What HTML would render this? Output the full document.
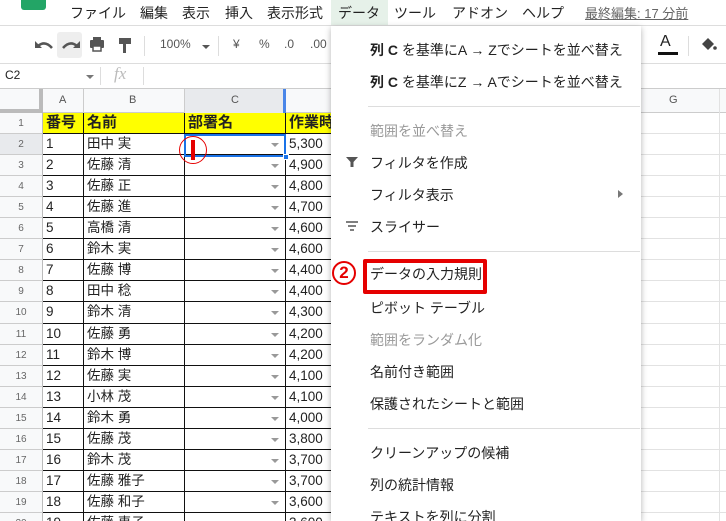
<!DOCTYPE html>
<html><head><meta charset="utf-8"><style>
*{margin:0;padding:0;box-sizing:border-box}
html,body{width:726px;height:521px;overflow:hidden}
body{background:#fff;font-family:"Liberation Sans","Noto Sans CJK JP",sans-serif;position:relative;color:#222}
.a{position:absolute}
.menu span{position:absolute;top:3px;font-size:14px;color:#222}
.rh{position:absolute;left:0;width:43px;text-align:center;font-size:10px;color:#666;background:#f8f9fa;border-bottom:1px solid #ccc;border-right:1px solid #bbb}
.c{position:absolute;font-size:13.5px;padding-left:3px;border-right:1px solid #111;border-bottom:1px solid #111;white-space:nowrap;overflow:hidden;line-height:20px}
.dd{position:absolute;width:0;height:0;border-left:4px solid transparent;border-right:4px solid transparent;border-top:4px solid #888}
.mi{position:absolute;left:370px;font-size:14px;color:#222;white-space:nowrap}
.dis{color:#999}
.sep{position:absolute;left:368px;width:272px;height:1px;background:#ddd}
</style></head><body>
<div class="a" style="left:21px;top:0;width:25px;height:10px;background:#23a566;border-radius:0 0 3px 3px"></div>
<div class="menu">
<span style="left:70px">ファイル</span><span style="left:140px">編集</span><span style="left:182px">表示</span><span style="left:225px">挿入</span><span style="left:267px">表示形式</span>
</div>
<div class="a" style="left:331px;top:0;width:57px;height:26px;background:#e6f1e9"></div>
<span class="a" style="left:338px;top:3px;font-size:14px">データ</span>
<span class="a" style="left:394px;top:3px;font-size:14px">ツール</span>
<span class="a" style="left:452px;top:3px;font-size:14px">アドオン</span>
<span class="a" style="left:522px;top:3px;font-size:14px">ヘルプ</span>
<span class="a" style="left:585px;top:3px;font-size:13px;color:#666;text-decoration:underline">最終編集: 17 分前</span>
<div class="a" style="left:0;top:25px;width:726px;height:1px;background:#ddd"></div>
<div class="a" style="left:57px;top:32px;width:25px;height:26px;background:#eee;border-radius:3px"></div>
<svg class="a" style="left:0;top:35px" width="140" height="20"><path d="M38 11 q7 -6 14 2" stroke="#555" stroke-width="2.5" fill="none"/><path d="M35 6 v7 h7z" fill="#555"/><path d="M77 11 q-7 -6 -14 2" stroke="#555" stroke-width="2.5" fill="none"/><path d="M80 6 v7 h-7z" fill="#555"/><rect x="90" y="5" width="14" height="8" fill="#555" rx="1"/><rect x="93" y="2" width="8" height="3" fill="#555"/><rect x="93" y="11" width="8" height="5" fill="#fff" stroke="#555" stroke-width="1.5"/><rect x="119" y="3" width="12" height="6" fill="#555"/><rect x="123" y="9" width="3" height="9" fill="#555"/></svg>
<div class="a" style="left:144px;top:36px;width:1px;height:20px;background:#ddd"></div>
<span class="a" style="left:160px;top:37px;font-size:12px;color:#555">100%</span>
<div class="dd" style="left:202px;top:45px;border-top-color:#555"></div>
<div class="a" style="left:218px;top:36px;width:1px;height:20px;background:#ddd"></div>
<span class="a" style="left:233px;top:37px;font-size:12px;color:#555">¥</span>
<span class="a" style="left:259px;top:37px;font-size:12px;color:#555">%</span>
<span class="a" style="left:284px;top:37px;font-size:12px;color:#555">.0</span>
<span class="a" style="left:310px;top:37px;font-size:12px;color:#555">.00</span>
<span class="a" style="left:660px;top:33px;font-size:16px;color:#222">A</span>
<div class="a" style="left:658px;top:52px;width:20px;height:3px;background:#111"></div>
<div class="a" style="left:688px;top:36px;width:1px;height:20px;background:#ddd"></div>
<svg class="a" style="left:700px;top:36px" width="18" height="16"><path d="M2 8 l6 -6 6 6 -6 6z" fill="#444"/><circle cx="15" cy="12" r="1.8" fill="#444"/></svg>
<div class="a" style="left:0;top:63px;width:726px;height:1px;background:#ddd"></div>
<span class="a" style="left:5px;top:68px;font-size:12px">C2</span>
<div class="dd" style="left:86px;top:75px;border-top-color:#777"></div>
<div class="a" style="left:100px;top:67px;width:1px;height:18px;background:#ddd"></div>
<span class="a" style="left:114px;top:64px;font-size:17px;color:#bbb;font-family:'Liberation Serif',serif;font-style:italic">fx</span>
<div class="a" style="left:143px;top:67px;width:1px;height:18px;background:#ddd"></div>
<div class="a" style="left:0;top:88px;width:726px;height:1px;background:#ccc"></div>
<div class="a" style="left:0;top:89px;width:726px;height:24px;background:#f8f9fa;border-bottom:1px solid #ccc"></div>
<div class="a" style="left:0;top:89px;width:43px;height:24px;border-right:4px solid #bbb;border-bottom:4px solid #bbb;background:#f8f9fa"></div>
<div class="a" style="left:184px;top:89px;width:101px;height:24px;background:#e8eaed"></div>
<div class="a" style="left:283px;top:89px;width:3px;height:24px;background:#4a86e8"></div>
<span class="a" style="left:59px;top:94px;font-size:11px;color:#555">A</span>
<span class="a" style="left:129px;top:94px;font-size:11px;color:#555">B</span>
<span class="a" style="left:231px;top:94px;font-size:11px;color:#555">C</span>
<span class="a" style="left:669px;top:94px;font-size:11px;color:#555">G</span>
<div class="a" style="left:83px;top:89px;width:1px;height:24px;background:#ccc"></div>
<div class="a" style="left:184px;top:89px;width:1px;height:24px;background:#ccc"></div>
<div class="a" style="left:719px;top:89px;width:1px;height:432px;background:#e2e2e2"></div>
<div id="grid"></div>
<div class="a" style="left:331px;top:26px;width:310px;height:495px;background:#fff;box-shadow:0 2px 6px rgba(0,0,0,.3)"></div>
<div class="mi" style="top:40px"><b>列 C</b> を基準にA → Zでシートを並べ替え</div>
<div class="mi" style="top:72px"><b>列 C</b> を基準にZ → Aでシートを並べ替え</div>
<div class="sep" style="top:106px"></div>
<div class="mi dis" style="top:121px">範囲を並べ替え</div>
<svg class="a" style="left:345px;top:156px" width="14" height="12"><path d="M1 1 h12 l-4.5 5 v5 h-3 v-5z" fill="#555"/></svg>
<div class="mi" style="top:153px">フィルタを作成</div>
<div class="mi" style="top:185px">フィルタ表示</div>
<div class="a" style="left:618px;top:190px;width:0;height:0;border-top:4px solid transparent;border-bottom:4px solid transparent;border-left:5px solid #777"></div>
<svg class="a" style="left:345px;top:221px" width="14" height="10"><path d="M1 1h12M3 5h8M5 9h4" stroke="#555" stroke-width="1.6"/></svg>
<div class="mi" style="top:217px">スライサー</div>
<div class="sep" style="top:251px"></div>
<div class="a" style="left:363px;top:259px;width:124px;height:35px;border:4px solid #e50000;border-radius:2px"></div>
<div class="a" style="left:332px;top:261px;width:24px;height:24px;border:2.5px solid #e50000;border-radius:50%;color:#e50000;font-weight:bold;font-size:17px;text-align:center;line-height:19px;background:#fff">2</div>
<div class="mi" style="top:264px">データの入力規則</div>
<div class="mi" style="top:298px">ピボット テーブル</div>
<div class="mi dis" style="top:330px">範囲をランダム化</div>
<div class="mi" style="top:362px">名前付き範囲</div>
<div class="mi" style="top:394px">保護されたシートと範囲</div>
<div class="sep" style="top:428px"></div>
<div class="mi" style="top:443px">クリーンアップの候補</div>
<div class="mi" style="top:475px">列の統計情報</div>
<div class="mi" style="top:507px">テキストを列に分割</div>
<script>
var d=[["番号","名前","部署名","作業時"],["1","田中 実","","5,300"],["2","佐藤 清","","4,900"],["3","佐藤 正","","4,800"],["4","佐藤 進","","4,700"],["5","高橋 清","","4,600"],["6","鈴木 実","","4,600"],["7","佐藤 博","","4,400"],["8","田中 稔","","4,400"],["9","鈴木 清","","4,300"],["10","佐藤 勇","","4,200"],["11","鈴木 博","","4,200"],["12","佐藤 実","","4,100"],["13","小林 茂","","4,100"],["14","鈴木 勇","","4,000"],["15","佐藤 茂","","3,800"],["16","鈴木 茂","","3,700"],["17","佐藤 雅子","","3,700"],["18","佐藤 和子","","3,600"],["19","佐藤 恵子","","3,600"]];
var cols=[[43,41],[84,101],[185,101],[286,50]];var h="";
for(var r=0;r<20;r++){var t=Math.round(113+r*21.05);var hh=Math.round(113+(r+1)*21.05)-t;
h+='<div class="rh" style="top:'+t+'px;height:'+hh+'px;line-height:'+hh+'px;'+(r==1?'background:#e8eaed;':'')+'">'+(r+1)+'</div>';
for(var c=0;c<4;c++){var st='left:'+cols[c][0]+'px;top:'+t+'px;width:'+cols[c][1]+'px;height:'+hh+'px;';
if(r==0)st+='background:#ffff00;font-weight:bold;font-size:15px;';
h+='<div class="c" style="'+st+'">'+d[r][c]+'</div>';}
if(r>0)h+='<div class="dd" style="left:271px;top:'+(t+9)+'px;border-top-color:#999"></div>';
h+='<div class="a" style="left:641px;top:'+(t+hh-1)+'px;width:85px;height:1px;background:#e2e2e2"></div>';}
h+='<div class="a" style="left:184px;top:134px;width:102px;height:23px;border:2px solid #1a73e8"></div><div class="a" style="left:283px;top:154px;width:6px;height:6px;background:#1a73e8;border:1px solid #fff"></div>';
h+='<div class="a" style="left:179px;top:136px;width:28px;height:28px;border:1.5px solid #e50000;border-radius:50%"></div><div class="a" style="left:191px;top:140px;width:4px;height:20px;background:#e50000"></div>';
document.getElementById("grid").innerHTML=h;
</script>
</body></html>
